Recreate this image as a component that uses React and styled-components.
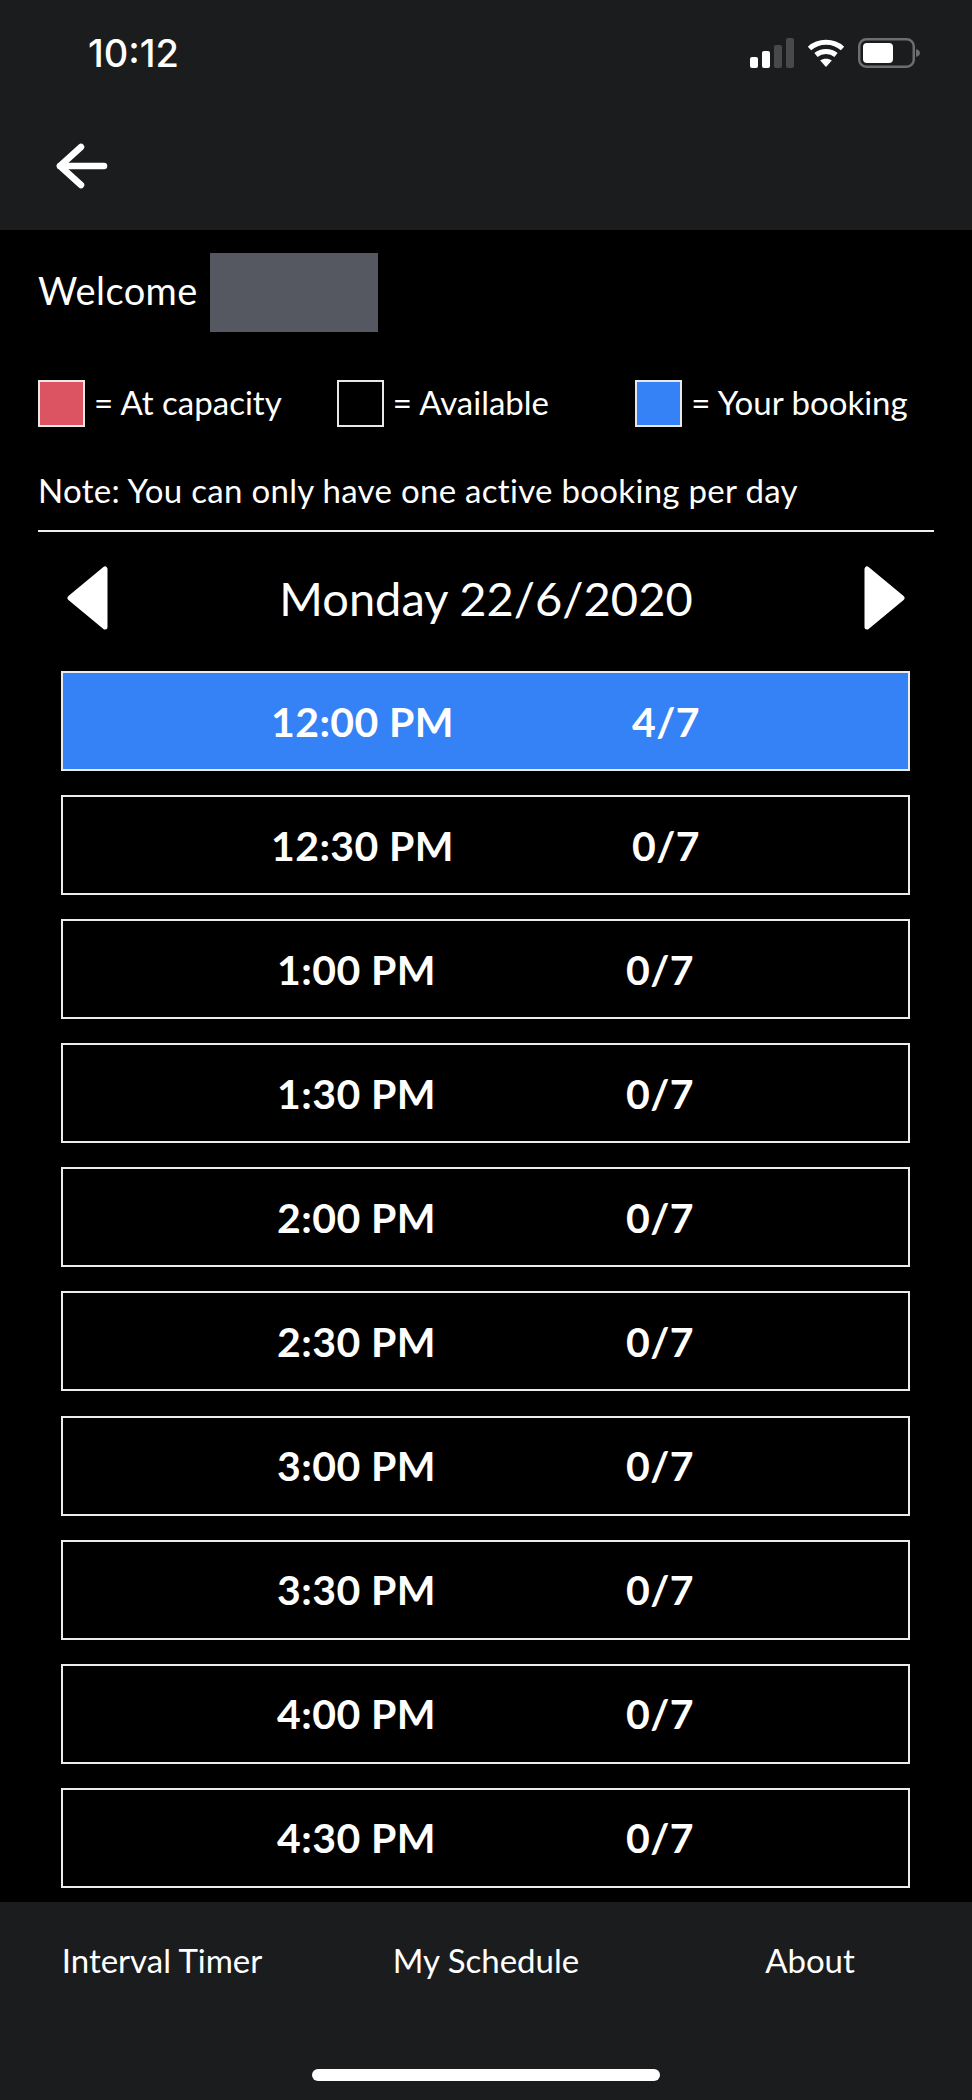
import React from 'react';
import styled, { createGlobalStyle } from 'styled-components';

const GlobalStyle = createGlobalStyle`
  html, body {
    margin: 0;
    padding: 0;
    background: #000;
  }
  * { box-sizing: border-box; }
`;

const Screen = styled.div`
  width: 972px;
  height: 2100px;
  display: flex;
  flex-direction: column;
  background: #000;
  color: #fff;
  font-family: Lato, "Open Sans", sans-serif;
  overflow: hidden;
`;

const Header = styled.header`
  height: 230px;
  flex: none;
  background: #1b1c1e;
`;

const StatusBar = styled.div`
  height: 106px;
  display: flex;
  align-items: center;
  justify-content: space-between;
  padding: 0 52px 0 88px;
`;

const Clock = styled.span`
  font-family: Inter, sans-serif;
  font-size: 38px;
  font-weight: 500;
`;

const StatusIcons = styled.div`
  display: flex;
  align-items: center;
  gap: 13px;
`;

const NavBar = styled.div`
  height: 124px;
  display: flex;
  align-items: center;
  padding: 0 0 4px 54px;
`;

const Main = styled.main`
  flex: 1;
  padding: 23px 38px 0;
  overflow: hidden;
`;

const WelcomeRow = styled.div`
  display: flex;
  align-items: center;
  gap: 12px;
  font-size: 38px;
  letter-spacing: 0.4px;
  height: 79px;
`;

const WelcomeText = styled.span`
  padding-bottom: 6px;
`;

const Redacted = styled.div`
  width: 168px;
  height: 79px;
  background: #555860;
`;

const Legend = styled.div`
  display: grid;
  grid-template-columns: repeat(3, 1fr);
  margin-top: 48px;
`;

const LegendItem = styled.div`
  display: flex;
  align-items: center;
  gap: 9px;
  font-size: 33px;
  line-height: 44px;
`;

const LegendLabel = styled.span`
  padding-bottom: 3px;
`;

const Swatch = styled.span`
  width: 47px;
  height: 47px;
  flex: none;
  border: 2px solid #e8e8e8;
  background: ${(p) => p.$color};
`;

const Note = styled.p`
  margin: 0;
  padding: 43px 0 20px;
  font-size: 33px;
  letter-spacing: 0.3px;
  line-height: 40px;
  border-bottom: 2px solid #f0f0f0;
`;

const DateNav = styled.div`
  display: flex;
  align-items: center;
  justify-content: space-between;
  height: 136px;
  padding: 0 29px 4px;
`;

const DateTitle = styled.h1`
  margin: 0;
  font-size: 47px;
  font-weight: 400;
`;

const Slots = styled.div`
  margin: 0 24px 0 23px;
  display: flex;
  flex-direction: column;
  gap: 24.1px;
  padding-top: 3px;
`;

const Slot = styled.div`
  height: 100px;
  flex: none;
  display: flex;
  align-items: center;
  justify-content: space-around;
  padding: 0 119px;
  border: 2px solid #ececec;
  background: ${(p) => (p.$booked ? '#3482f6' : '#000')};
  font-size: 41px;
  font-weight: 700;
  letter-spacing: 0.4px;
`;

const Footer = styled.footer`
  height: 198px;
  flex: none;
  background: #1b1c1e;
  display: flex;
  flex-direction: column;
  align-items: center;
`;

const Tabs = styled.nav`
  width: 100%;
  display: grid;
  grid-template-columns: repeat(3, 1fr);
  padding-top: 36px;
  font-size: 33px;
  line-height: 44px;
  text-align: center;
`;

const HomeIndicator = styled.div`
  width: 348px;
  height: 12px;
  margin-top: 87px;
  border-radius: 6px;
  background: #fff;
`;

const SignalIcon = () => (
  <svg width="44" height="30" viewBox="0 0 44 30">
    <rect x="0" y="19" width="8" height="11" rx="2" fill="#fff" />
    <rect x="12" y="13" width="8" height="17" rx="2" fill="#fff" />
    <rect x="24" y="7" width="8" height="23" rx="2" fill="#48494b" />
    <rect x="36" y="0" width="8" height="30" rx="2" fill="#48494b" />
  </svg>
);

const WifiIcon = () => (
  <svg width="38" height="28" viewBox="0 0 38 28" fill="none">
    <path d="M2.5 9.5C11.5 1.2 26.5 1.2 35.5 9.5" stroke="#fff" strokeWidth="5" strokeLinecap="butt" />
    <path d="M9 16C14.5 11.3 23.5 11.3 29 16" stroke="#fff" strokeWidth="5" />
    <path d="M13.2 21.5C16.2 19.2 21.8 19.2 24.8 21.5L19 28Z" fill="#fff" />
  </svg>
);

const BatteryIcon = () => (
  <svg width="62" height="30" viewBox="0 0 62 30">
    <rect x="1.25" y="1.25" width="54.5" height="27.5" rx="7" fill="none" stroke="#6d6e70" strokeWidth="2.5" />
    <rect x="5" y="5" width="30" height="20" rx="4" fill="#fff" />
    <path d="M58 11C60.5 11.8 62 13 62 15C62 17 60.5 18.2 58 19Z" fill="#6d6e70" />
  </svg>
);

const BackArrow = () => (
  <svg width="54" height="48" viewBox="0 0 54 48" fill="none" stroke="#fff" strokeWidth="6.5" strokeLinecap="round" strokeLinejoin="round">
    <path d="M50 24H6" />
    <path d="M27 5L6 24L27 43" />
  </svg>
);

const DayArrow = ({ flip }) => (
  <svg width="41" height="64" viewBox="0 0 41 64" style={flip ? { transform: 'scaleX(-1)' } : undefined}>
    <path d="M38 3V61L3 32Z" fill="#fff" stroke="#fff" strokeWidth="5" strokeLinejoin="round" />
  </svg>
);

const slots = [
  { time: '12:00 PM', count: '4/7', booked: true },
  { time: '12:30 PM', count: '0/7' },
  { time: '1:00 PM', count: '0/7' },
  { time: '1:30 PM', count: '0/7' },
  { time: '2:00 PM', count: '0/7' },
  { time: '2:30 PM', count: '0/7' },
  { time: '3:00 PM', count: '0/7' },
  { time: '3:30 PM', count: '0/7' },
  { time: '4:00 PM', count: '0/7' },
  { time: '4:30 PM', count: '0/7' },
];

export default function App() {
  return (
    <Screen>
      <GlobalStyle />
      <Header>
        <StatusBar>
          <Clock>10:12</Clock>
          <StatusIcons>
            <SignalIcon />
            <WifiIcon />
            <BatteryIcon />
          </StatusIcons>
        </StatusBar>
        <NavBar>
          <BackArrow />
        </NavBar>
      </Header>
      <Main>
        <WelcomeRow>
          <WelcomeText>Welcome</WelcomeText>
          <Redacted />
        </WelcomeRow>
        <Legend>
          <LegendItem><Swatch $color="#dc5461" /><LegendLabel>= At capacity</LegendLabel></LegendItem>
          <LegendItem><Swatch $color="#000" /><LegendLabel>= Available</LegendLabel></LegendItem>
          <LegendItem><Swatch $color="#3482f6" /><LegendLabel>= Your booking</LegendLabel></LegendItem>
        </Legend>
        <Note>Note: You can only have one active booking per day</Note>
        <DateNav>
          <DayArrow />
          <DateTitle>Monday 22/6/2020</DateTitle>
          <DayArrow flip />
        </DateNav>
        <Slots>
          {slots.map((s) => (
            <Slot key={s.time} $booked={s.booked}>
              <span>{s.time}</span>
              <span>{s.count}</span>
            </Slot>
          ))}
        </Slots>
      </Main>
      <Footer>
        <Tabs>
          <span>Interval Timer</span>
          <span>My Schedule</span>
          <span>About</span>
        </Tabs>
        <HomeIndicator />
      </Footer>
    </Screen>
  );
}
